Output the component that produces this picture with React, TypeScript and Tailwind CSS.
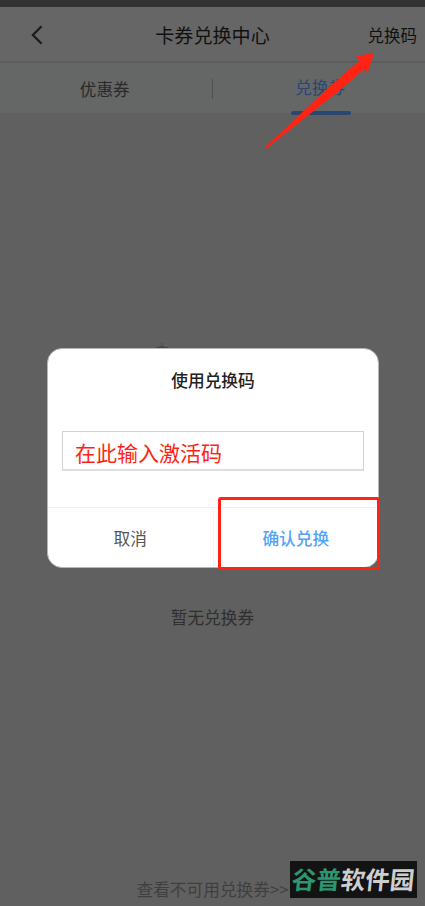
import type { ReactNode } from 'react'

const TABS = [
  { id: 'coupon', label: '优惠券' },
  { id: 'exchange', label: '兑换券' },
]

function BackIcon() {
  return (
    <svg width="12" height="20" viewBox="0 0 12 20" fill="none" stroke="#1c1c1c" strokeWidth="2.3">
      <path d="M10.6 1.2 1.9 10l8.7 8.8" />
    </svg>
  )
}

function Header() {
  return (
    <header className="grid h-[56px] grid-cols-[1fr_auto_1fr] items-center border-b-2 border-[#5d5d5d] bg-[#666]">
      <button className="justify-self-start pt-px pl-[31px]" aria-label="返回"><BackIcon /></button>
      <h1 className="pt-px text-[19.1px] leading-7 text-[#111]">卡券兑换中心</h1>
      <button className="justify-self-end pt-px pr-[8px] text-[16.5px] leading-6 text-[#111]">兑换码</button>
    </header>
  )
}

function Tabs({ active }: { active: string }) {
  return (
    <nav className="flex h-[50px] items-stretch bg-[#656666]">
      {TABS.map((t, i) => (
        <button
          key={t.id}
          className={
            'relative flex flex-1 justify-center text-[16.6px] leading-6 ' +
            (i === 0 ? 'pt-[14px] pr-[2px] ' : 'pt-[12px] pl-[4px] ') +
            (t.id === active ? 'text-[#294770]' : 'text-[#2a2a2a]')
          }
        >
          {t.label}
          {i === 0 && <span className="absolute -right-px top-4 h-[20px] w-px bg-[#505050]" />}
          {t.id === active && (
            <span className="absolute top-[48px] left-[79px] h-1 w-[60px] rounded-full bg-[#294770]" />
          )}
        </button>
      ))}
    </nav>
  )
}

function Dialog({ children }: { children: ReactNode }) {
  return (
    <div role="dialog" className="absolute left-[47px] top-[348px] flex h-[220px] w-[332px] flex-col rounded-[15px] border border-[#b5b5b5] bg-white">
      {children}
    </div>
  )
}

// Red pointer from the tab bar up to the code button
function Arrow() {
  return (
    <svg className="absolute left-[260px] top-[45px]" width="120" height="110" viewBox="0 0 120 110" fill="#ff2314">
      <path d="M114 7.5 95 11.7l5.3 3L66.7 44.3 4.6 102.8l1.2 1.3L76.7 47.7l28-24 2.6 4.8Z" />
    </svg>
  )
}

export default function App() {
  return (
    <div className="relative flex h-[906px] w-[425px] flex-col overflow-hidden bg-[#606060] font-['Noto_Sans_CJK_SC',sans-serif]">
      <div className="h-[7px] bg-[#333]" />
      <Header />
      <Tabs active="exchange" />

      <main className="flex flex-1 flex-col items-center">
        {/* top of the empty-state drawing, mostly behind the dialog */}
        <svg className="mt-[230px] mr-[101px]" width="14" height="10" viewBox="0 0 14 10" fill="none" stroke="#484848">
          <path d="M7 0v6M4 3.5h6M1 4.5h12" />
        </svg>
        <p className="mt-[252px] text-[16.7px] leading-6 text-[#2f2f2f]">暂无兑换券</p>
        <button className="mt-[248px] text-[16.7px] leading-6 text-[#3f3f3f]">查看不可用兑换券&gt;&gt;</button>
      </main>

      <Dialog>
        <h2 className="pt-[19px] text-center text-[16.7px] leading-6 font-medium text-[#222]">使用兑换码</h2>
        <div className="mx-[14px] mt-[39px] flex h-[40px] items-center border border-b-2 border-[#d2d2d4] border-b-[#dedee2] pl-[12px] pt-[3px] text-[21px] leading-6 text-[#ff2314]">
          在此输入激活码
        </div>
        <div className="mt-auto flex h-[60px] border-t border-[#f0f0f0] text-[16.7px] leading-6">
          <button className="flex-1 border-r border-[#f4f4f4] text-[#555]">取消</button>
          <button className="flex-1 font-medium text-[#55a3f8]">确认兑换</button>
        </div>
      </Dialog>

      <div className="absolute left-[218px] top-[497px] h-[73px] w-[162px] rounded-[3px] border-3 border-[#ff2314]" />
      <Arrow />

      <div className="absolute left-[290px] top-[861px] flex h-[37px] w-[127px] items-center justify-center bg-[#131313] text-[24.5px] leading-none font-bold whitespace-nowrap text-[#cecece]">
        <span className="inline-block -skew-x-6"><span className="text-[#2c9670]">谷普</span>软件园</span>
      </div>
    </div>
  )
}
